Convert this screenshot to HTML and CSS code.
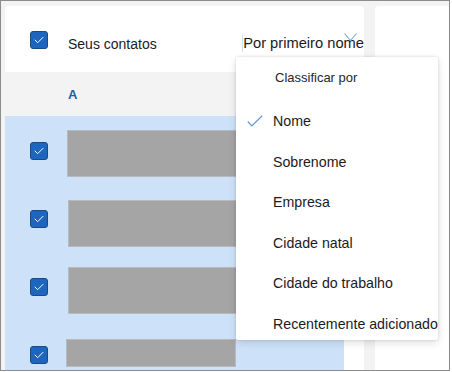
FILE: index.html
```html
<!DOCTYPE html>
<html lang="pt">
<head>
<meta charset="utf-8">
<link rel="stylesheet" href="styles.css">
</head>
<body>
<div class="frame">
  <div class="left-col">
    <div class="header-card">
      <span class="checkbox header-check">
        <svg viewBox="0 0 18 18" width="16" height="16"><polyline points="4.5,9 7.5,12 13.5,6" fill="none" stroke="#fff" stroke-width="1.1" stroke-linecap="round" stroke-linejoin="round"/></svg>
      </span>
      <span class="title">Seus contatos</span>
      <span class="sort-label">Por primeiro nome</span>
      <svg class="chevron" viewBox="0 0 14 9" width="14" height="9"><polyline points="0.5,0.5 6.5,7.5 12.5,0.5" fill="none" stroke="#7ea9dc" stroke-width="1.1"/></svg>
    </div>
    <div class="section-row"><span class="section-letter">A</span></div>
    <div class="list">
      <div class="selected">
        <div class="row r1">
          <span class="checkbox"><svg viewBox="0 0 18 18" width="16" height="16"><polyline points="4.5,9 7.5,12 13.5,6" fill="none" stroke="#fff" stroke-width="1.1" stroke-linecap="round" stroke-linejoin="round"/></svg></span>
          <span class="placeholder"></span>
        </div>
        <div class="row r2">
          <span class="checkbox"><svg viewBox="0 0 18 18" width="16" height="16"><polyline points="4.5,9 7.5,12 13.5,6" fill="none" stroke="#fff" stroke-width="1.1" stroke-linecap="round" stroke-linejoin="round"/></svg></span>
          <span class="placeholder"></span>
        </div>
        <div class="row r3">
          <span class="checkbox"><svg viewBox="0 0 18 18" width="16" height="16"><polyline points="4.5,9 7.5,12 13.5,6" fill="none" stroke="#fff" stroke-width="1.1" stroke-linecap="round" stroke-linejoin="round"/></svg></span>
          <span class="placeholder"></span>
        </div>
        <div class="row r4">
          <span class="checkbox"><svg viewBox="0 0 18 18" width="16" height="16"><polyline points="4.5,9 7.5,12 13.5,6" fill="none" stroke="#fff" stroke-width="1.1" stroke-linecap="round" stroke-linejoin="round"/></svg></span>
          <span class="placeholder"></span>
        </div>
      </div>
    </div>
  </div>
  <div class="right-panel"></div>

  <div class="menu">
    <div class="menu-title">Classificar por</div>
    <div class="menu-item checked">
      <svg class="menu-check" viewBox="0 0 16 12" width="16" height="12"><polyline points="0.8,6.5 4.8,11 15.2,0.8" fill="none" stroke="#5f9ad8" stroke-width="1.2"/></svg>
      Nome
    </div>
    <div class="menu-item">Sobrenome</div>
    <div class="menu-item">Empresa</div>
    <div class="menu-item">Cidade natal</div>
    <div class="menu-item">Cidade do trabalho</div>
    <div class="menu-item">Recentemente adicionado</div>
  </div>
</div>
</body>
</html>
```

FILE: styles.css
```css
* { box-sizing: border-box; }

html, body {
  margin: 0;
  padding: 0;
  background: #ffffff;
  font-family: "Liberation Sans", Arial, sans-serif;
  color: #1b1b1b;
}

.frame {
  position: relative;
  width: 450px;
  height: 371px;
  border: 1px solid #8c8c8c;
  background: #f3f3f3;
  display: flex;
  gap: 11px;
  padding: 5px 0 0 4px;
  overflow: hidden;
}

.left-col {
  width: 359px;
  display: flex;
  flex-direction: column;
}

.header-card {
  position: relative;
  height: 66px;
  flex: none;
  background: #ffffff;
  border-radius: 4px 4px 0 0;
  display: flex;
  align-items: flex-start;
  padding-left: 25px;
}

.checkbox {
  width: 18px;
  height: 18px;
  flex: none;
  background: #1d66bf;
  border: 1px solid #1a4a80;
  border-radius: 3px;
  display: flex;
  align-items: center;
  justify-content: center;
}

.header-check {
  margin-top: 25px;
}

.title {
  margin-top: 30px;
  margin-left: 20px;
  font-size: 14px;
  line-height: 16px;
  color: #1b1b1b;
}

.sort-label {
  margin-top: 29px;
  margin-left: auto;
  font-size: 14.7px;
  line-height: 17px;
  white-space: nowrap;
  color: #1b1b1b;
  border-left: 1px solid #d3deec;
}

.chevron {
  position: absolute;
  left: 339px;
  top: 27px;
}

.section-row {
  height: 44px;
  flex: none;
  background: #f3f3f3;
  padding-left: 63px;
  display: flex;
  align-items: center;
}

.section-letter {
  font-size: 13px;
  font-weight: bold;
  color: #1f5ea8;
  padding-top: 1px;
}

.list {
  flex: 1;
  background: #ffffff;
}

.selected {
  width: 339px;
  height: 100%;
  background: #cde2f9;
  padding-top: 1px;
}

.row {
  height: 68px;
  display: flex;
  align-items: flex-start;
  padding-left: 25px;
}

.row .checkbox {
  margin-top: 25px;
}

.placeholder {
  display: block;
  width: 170px;
  height: 47px;
  margin-left: 19px;
  background: #a5a5a5;
  border: 1px solid #b7babe;
}

.r1 .placeholder { margin-top: 13px; }
.r2 .placeholder { margin-top: 15px; margin-left: 20px; }
.r3 .placeholder { margin-top: 14px; margin-left: 20px; }
.r4 .placeholder { margin-top: 18px; height: 28px; margin-left: 18px; }

.right-panel {
  flex: 1;
  background: #ffffff;
  border-radius: 4px 0 0 0;
}

.menu {
  position: absolute;
  left: 235px;
  top: 56px;
  width: 202px;
  height: 283px;
  background: #ffffff;
  border-radius: 2px;
  box-shadow: 0 0 3px rgba(0, 0, 0, 0.14), 0 3px 8px rgba(0, 0, 0, 0.12);
  overflow: hidden;
}

.menu-title {
  padding: 11px 0 13px 39px;
  font-size: 13px;
  line-height: 20px;
  color: #262626;
}

.menu-item {
  position: relative;
  height: 40.5px;
  display: flex;
  align-items: center;
  padding-left: 37px;
  font-size: 14.2px;
  color: #1b1b1b;
  white-space: nowrap;
}

.menu-check {
  position: absolute;
  left: 11px;
  top: 14px;
}
```
